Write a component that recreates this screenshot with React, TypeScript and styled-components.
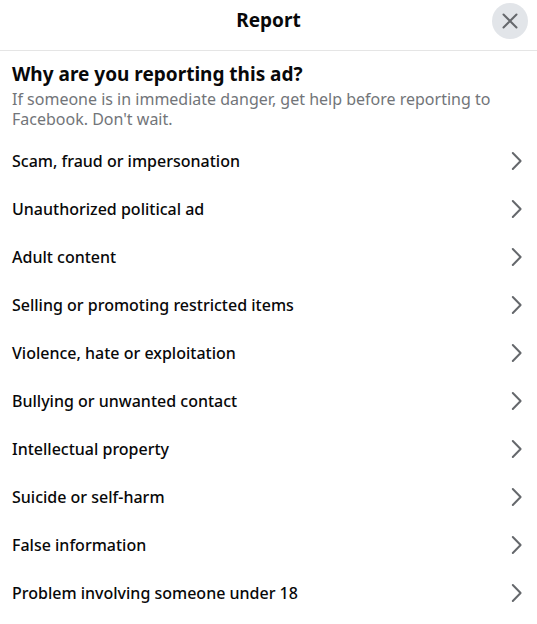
import React from 'react';
import styled, { createGlobalStyle } from 'styled-components';

const GlobalStyle = createGlobalStyle`
  *, *::before, *::after { box-sizing: border-box; }
  body {
    margin: 0;
    background: #fff;
    color: #080809;
    font-family: "Segoe UI", "Noto Sans", "Open Sans", sans-serif;
  }
`;

const Dialog = styled.main`
  width: 100%;
  padding-bottom: 7px;
  background: #fff;
`;

const Header = styled.header`
  display: grid;
  grid-template-columns: 52px 1fr 52px;
  align-items: center;
  height: 51px;
  padding-bottom: 9px;
  border-bottom: 1px solid #e5e5e5;
`;

const Title = styled.h1`
  grid-column: 2;
  margin: 0;
  padding-bottom: 2px;
  font-size: 19px;
  line-height: 24px;
  font-weight: 700;
  text-align: center;
`;

const CloseButton = styled.button`
  display: flex;
  align-items: center;
  justify-content: center;
  width: 36px;
  height: 36px;
  margin-left: 7px;
  padding: 0;
  border: 0;
  border-radius: 50%;
  background: #e2e5e9;
  color: #65686c;
  cursor: pointer;
`;

const Intro = styled.section`
  display: flex;
  flex-direction: column;
  gap: 3px;
  padding: 11px 12px 8px;
`;

const Question = styled.h2`
  margin: 0;
  font-size: 19px;
  line-height: 24px;
  font-weight: 700;
`;

const Hint = styled.p`
  margin: 0;
  font-size: 16px;
  line-height: 20px;
  color: #727579;
`;

const ReasonList = styled.ul`
  margin: 0;
  padding: 0;
  list-style: none;
`;

const ReasonButton = styled.button`
  display: flex;
  align-items: center;
  justify-content: space-between;
  width: 100%;
  height: 48px;
  padding: 0 12px;
  border: 0;
  background: transparent;
  color: inherit;
  font-family: inherit;
  font-size: 16px;
  line-height: 20px;
  font-weight: 500;
  text-align: left;
  cursor: pointer;
`;

const reasons = [
  'Scam, fraud or impersonation',
  'Unauthorized political ad',
  'Adult content',
  'Selling or promoting restricted items',
  'Violence, hate or exploitation',
  'Bullying or unwanted contact',
  'Intellectual property',
  'Suicide or self-harm',
  'False information',
  'Problem involving someone under 18',
];

const CloseIcon = () => (
  <svg width="20" height="20" viewBox="0 0 20 20" fill="none" stroke="currentColor" strokeWidth="2" strokeLinecap="round" aria-hidden="true">
    <path d="M3.5 3.5l13 13M16.5 3.5l-13 13" />
  </svg>
);

const ChevronIcon = () => (
  <svg width="16" height="24" viewBox="0 0 16 24" fill="none" stroke="#65686c" strokeWidth="2" strokeLinecap="round" strokeLinejoin="round" aria-hidden="true">
    <path d="M3.8 4l7.8 8-7.8 8" />
  </svg>
);

export default function App() {
  return (
    <>
      <GlobalStyle />
      <Dialog>
        <Header>
          <Title>Report</Title>
          <CloseButton type="button" aria-label="Close">
            <CloseIcon />
          </CloseButton>
        </Header>
        <Intro>
          <Question>Why are you reporting this ad?</Question>
          <Hint>
            If someone is in immediate danger, get help before reporting to Facebook. Don't wait.
          </Hint>
        </Intro>
        <ReasonList>
          {reasons.map((reason) => (
            <li key={reason}>
              <ReasonButton type="button">
                {reason}
                <ChevronIcon />
              </ReasonButton>
            </li>
          ))}
        </ReasonList>
      </Dialog>
    </>
  );
}
